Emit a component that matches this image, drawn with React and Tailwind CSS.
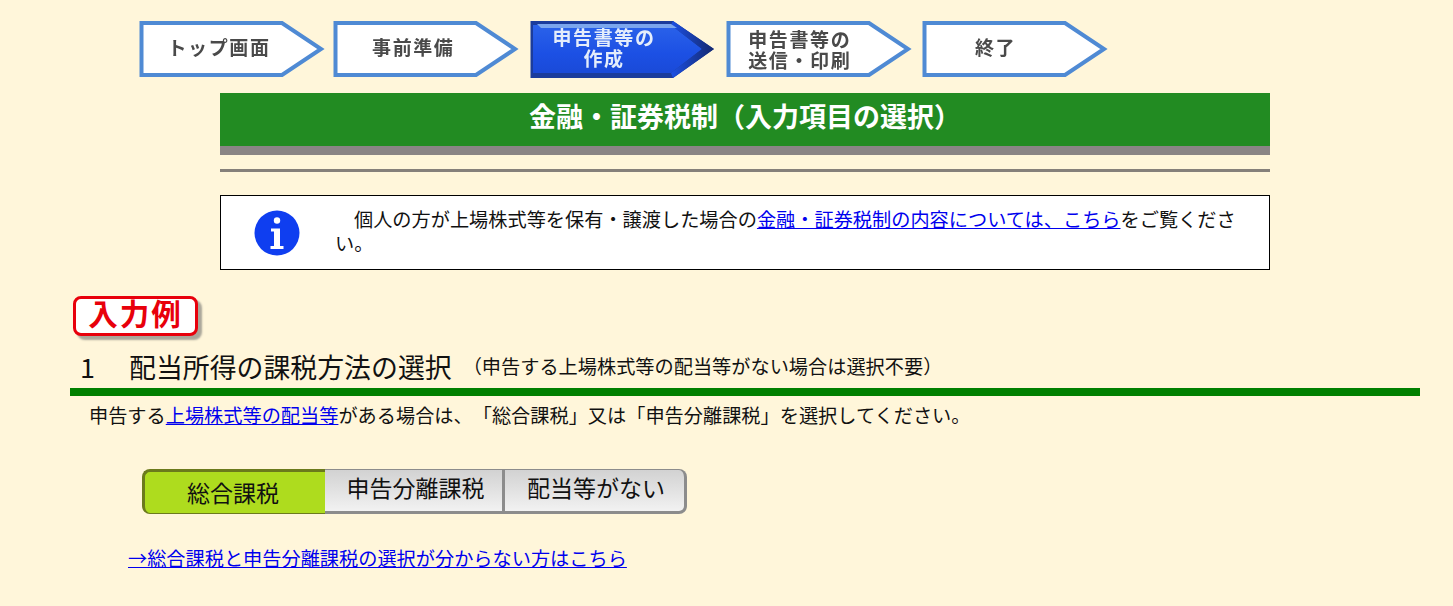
const FONT = "font-['Noto_Sans_CJK_JP','Liberation_Sans',sans-serif]";

const STEPS = [
  { key: "top", lines: ["トップ画面"], pad: "pr-[26px] pb-[5px]" },
  { key: "prep", lines: ["事前準備"], pad: "pr-[26px] pb-[5px]", shift: "-ml-[1.5px]" },
  { key: "make", lines: ["申告書等の", "作成"], pad: "pr-[38px] pb-[4px]", shift: "ml-[1px]", active: true },
  { key: "send", lines: ["申告書等の", "送信・印刷"], pad: "pr-[38px] pb-[1px]" },
  { key: "end", lines: ["終了"], pad: "pr-[38px] pb-[5px]" },
];

function Step({ lines, active, pad, shift }) {
  return (
    <div className={`relative w-[186px] h-[58px] blur-[0.4px] ${shift || ""}`}>
      {active ? (
        <svg className="absolute inset-0" width="186" height="58" viewBox="0 0 186 58">
          <defs>
            <linearGradient id="stepFill" x1="0" y1="0" x2="0" y2="1">
              <stop offset="0" stopColor="#2a62ea" />
              <stop offset="0.6" stopColor="#1c50e4" />
              <stop offset="1" stopColor="#1a4ad8" />
            </linearGradient>
            <linearGradient id="stepTip" x1="0" y1="0" x2="1" y2="0">
              <stop offset="0" stopColor="#1c50e4" />
              <stop offset="1" stopColor="#14286e" />
            </linearGradient>
          </defs>
          <polygon points="0.5,1 143,1 184,29 143,58 0.5,58" fill="#1b3c9c" />
          <polygon points="3,5 141,5 172,29 141,53 3,53" fill="url(#stepFill)" />
          <polygon points="141,5 143,1 184,29 143,58 141,53 172,29" fill="url(#stepTip)" />
          <polygon points="7,4 141,4 147,8 11,8" fill="#7ba6ee" />
        </svg>
      ) : (
        <svg className="absolute inset-0" width="186" height="58" viewBox="0 0 186 58">
          <polygon points="2.5,3 143,3 182,29 143,55 2.5,55" fill="#fff" stroke="#4f8ad4" strokeWidth="4" />
        </svg>
      )}
      <div
        className={`absolute inset-0 ${pad} flex flex-col items-center justify-center text-[19px] leading-[21px] font-bold tracking-[1.6px] ${
          active ? "text-[#e4edfb]" : "text-[#4a4a4a]"
        }`}
      >
        {lines.map((l) => (
          <span key={l}>{l}</span>
        ))}
      </div>
    </div>
  );
}

function InfoIcon() {
  return (
    <svg width="46" height="46" viewBox="0 0 46 46">
      <circle cx="23" cy="23" r="22.5" fill="#0f3ef0" />
      <circle cx="23" cy="10.5" r="3.2" fill="#fff" />
      <path d="M17 18.5h9v17.500h3.500v3h-13v-3H20v-14.500h-3z" fill="#fff" />
    </svg>
  );
}

export default function App() {
  return (
    <div className={`min-h-[606px] bg-[#fff6da] text-[#111] overflow-hidden [text-spacing-trim:space-all] ${FONT}`}>
      <nav className="pt-[20px] pl-[139px] flex gap-[9.75px]">
        {STEPS.map((s) => (
          <Step key={s.key} lines={s.lines} active={s.active} pad={s.pad} shift={s.shift} />
        ))}
      </nav>

      <div className="ml-[220px] w-[1050px] mt-[15px]">
        <h1 className="h-[62px] bg-[#228b22] border-b-[9px] border-[#8a8585] text-white text-[27px] font-bold flex items-center justify-center leading-none pb-[8px]">
          金融・証券税制（入力項目の選択）
        </h1>
        <div className="mt-[14px] h-[3px] bg-[#85807a]" />
        <div className="mt-[23px] h-[75px] border border-black bg-white flex items-center">
          <div className="w-[114px] shrink-0 flex justify-center pr-[3px]">
            <InfoIcon />
          </div>
          <p className="text-[19.2px] leading-[24px] pr-[26px] pb-[4px] indent-[19px]">
            個人の方が上場株式等を保有・譲渡した場合の
            <a href="#" className="text-[#0000ee] underline">金融・証券税制の内容については、こちら</a>
            をご覧ください。
          </p>
        </div>
      </div>

      <div className="ml-[73px] mt-[26px] w-[125px] h-[40px] rounded-[8px] border-[3px] border-[#e8000b] bg-white shadow-[4px_4px_2px_#aaa69a] flex items-center justify-center text-[#e8000b] text-[29.500px] font-bold tracking-[2px] leading-none pb-[6px]">
        入力例
      </div>

      <div className="ml-[70px] w-[1350px]">
        <h2 className="h-[60px] border-b-[8px] border-[#008000] pl-[10px] flex items-center pt-[10px] font-normal leading-none">
          <span className="text-[26.9px] w-[49px]">1</span>
          <span className="text-[26.9px]">配当所得の課税方法の選択</span>
          <span className="text-[19.2px] ml-[11px]">（申告する上場株式等の配当等がない場合は選択不要）</span>
        </h2>
        <p className="mt-[7px] pl-[19px] text-[19.2px] leading-[24px]">
          申告する<a href="#" className="text-[#0000ee] underline">上場株式等の配当等</a>がある場合は、「総合課税」又は「申告分離課税」を選択してください。
        </p>
      </div>

      <div className="ml-[142px] mt-[42px] w-[545px] h-[45px] flex">
        <button className="w-[183px] rounded-l-[8px] bg-[#aedc1e] border-t-[3px] border-l-[3px] border-b border-[#6b7a1c] text-[23px] pr-[4px] leading-none">
          総合課税
        </button>
        <button className="w-[180px] bg-gradient-to-b from-[#d2d2d2] to-[#f2f2f2] border-t border-b-[3px] border-r-[3px] border-[#8c8c8c] text-[23px] pl-[4px] pb-[7px] leading-none">
          申告分離課税
        </button>
        <button className="flex-1 rounded-r-[8px] bg-gradient-to-b from-[#d2d2d2] to-[#f2f2f2] border-t border-b-[3px] border-r-[3px] border-[#8c8c8c] text-[23px] pl-[3px] pb-[7px] leading-none">
          配当等がない
        </button>
      </div>

      <a href="#" className="block ml-[128px] mt-[32px] w-fit text-[19.2px] leading-[24px] text-[#0000ee] underline">
        →総合課税と申告分離課税の選択が分からない方はこちら
      </a>
    </div>
  );
}
